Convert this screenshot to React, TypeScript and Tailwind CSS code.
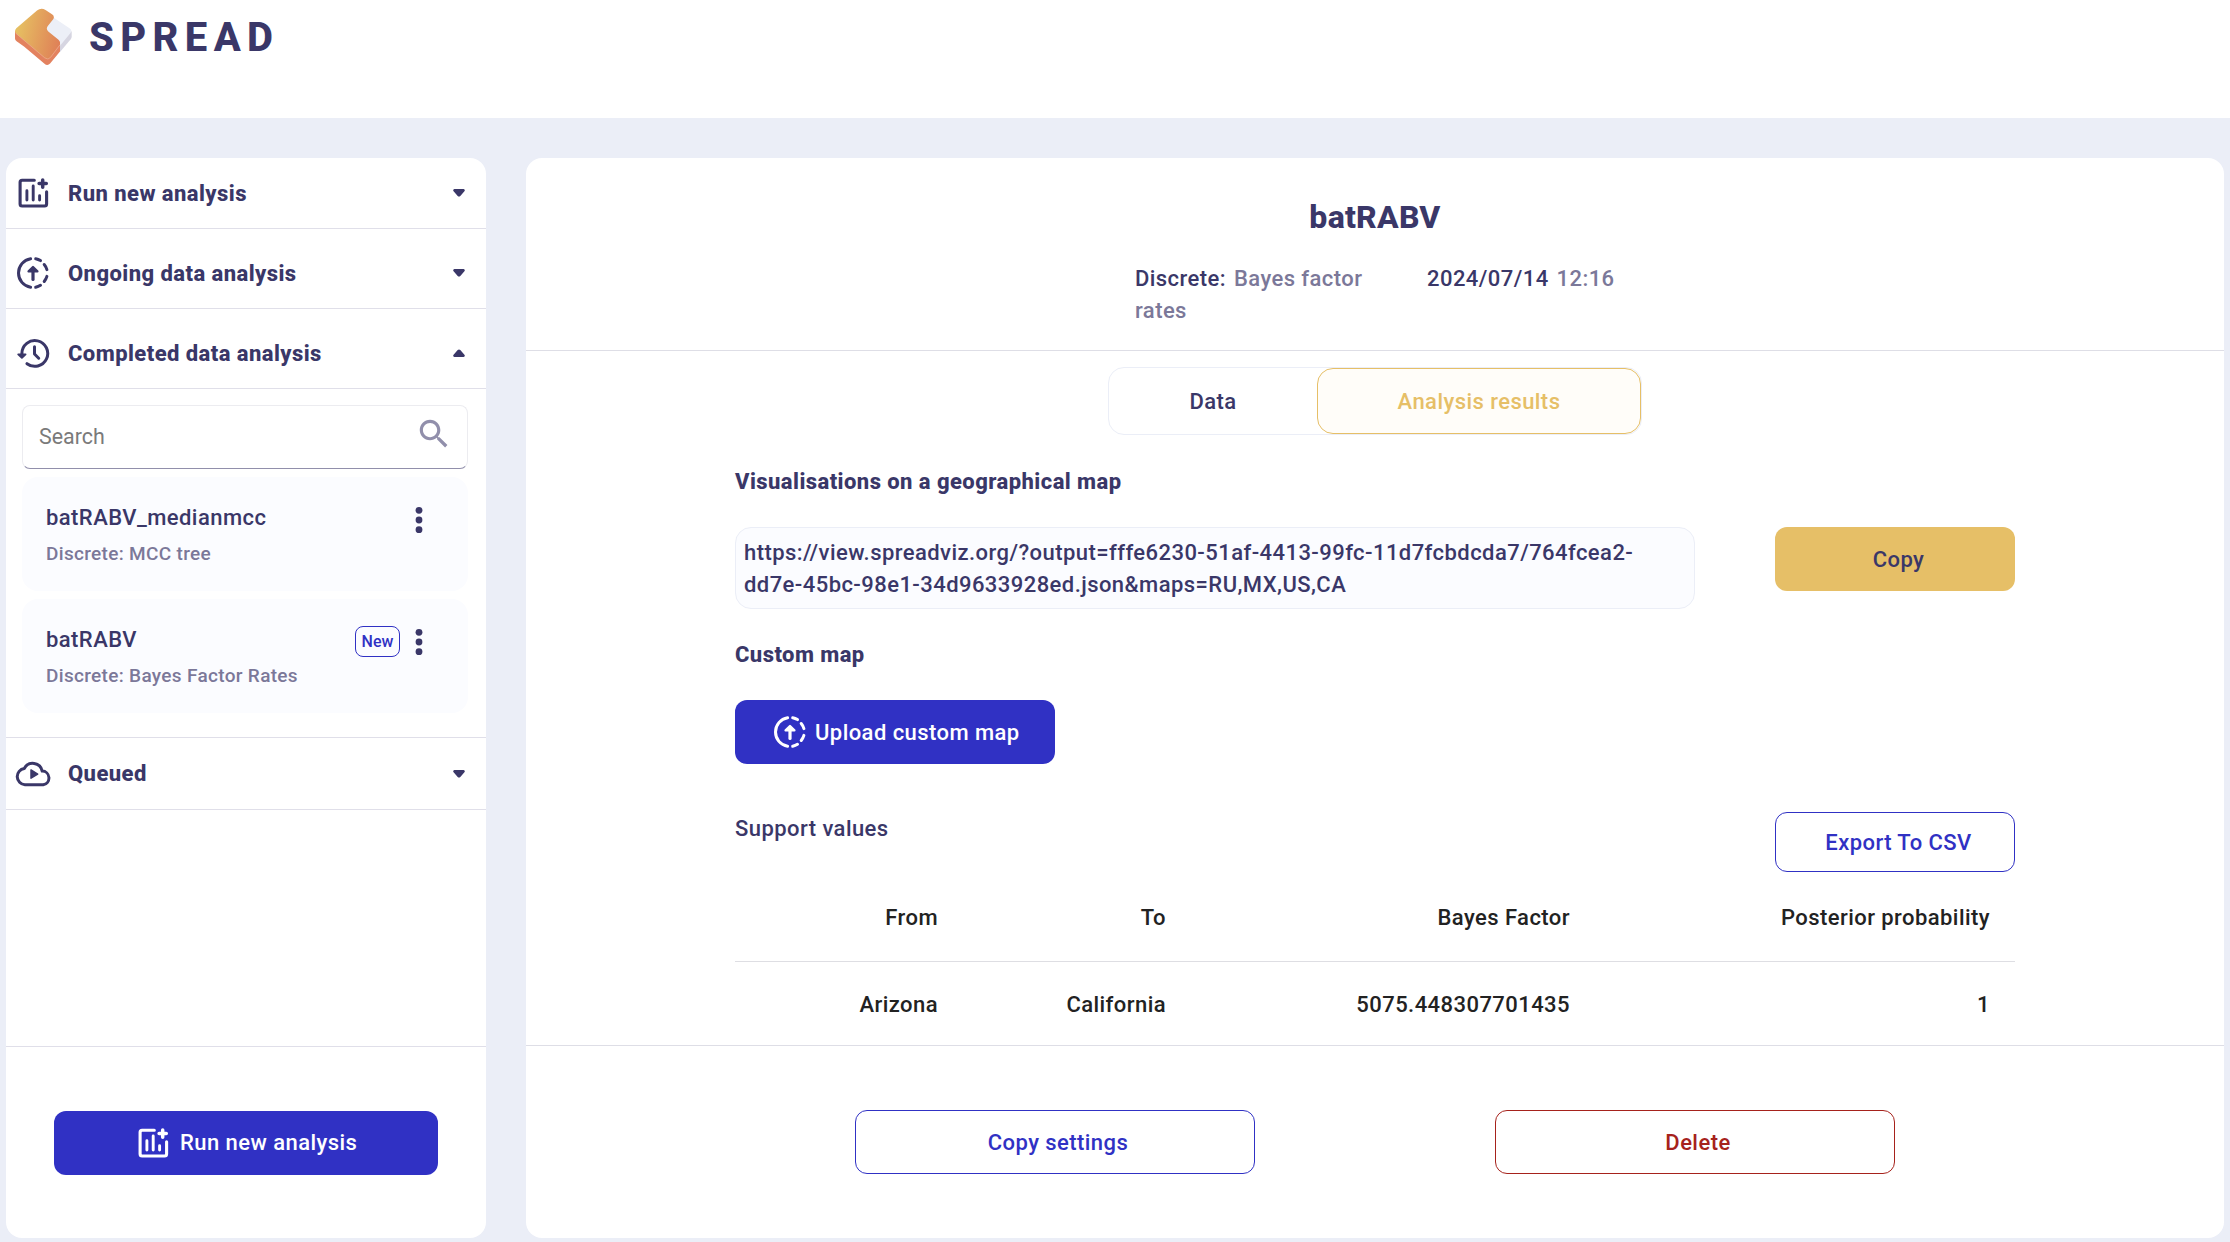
import React from "react";

function Logo() {
  return (
    <svg width="60" height="58" viewBox="14 8 60 58" fill="none">
      <defs>
        <linearGradient id="top" x1="16" y1="32" x2="60" y2="42" gradientUnits="userSpaceOnUse">
          <stop stopColor="#e6c062" />
          <stop offset="1" stopColor="#df8057" />
        </linearGradient>
      </defs>
      <path d="M70 29.5q1.7 1.3 1.7 3v4q0 1.500-1 2.800L60 52V40Z" fill="#d6d5e1" />
      <path d="M52 16.5 69.5 28.3q3 2 1 4.6L60.2 45.6 46 30Z" fill="#eceff7" />
      <path d="M15 31v7.5q0 1.5 1.6 2.8L24 46.5 44.5 63.7q3 2.6 5.600-.200L60 51.500V42Z" fill="#e3825f" />
      <path
        d="M16.3 28.2 37 10.6q4.200-3.300 8.500-.5L52 14.300q3 2 1.200 5L48 25.800q-2.500 3 .300 5.700L58.500 39.700q2.800 2.600.600 5.600L50.600 57.200q-2.400 3.200-5.800.600L16.600 34q-3-2.800-.300-5.800Z"
        fill="url(#top)"
      />
      <path d="M15.500 33 44.800 57.900q3.400 2.600 5.800-.600L60 44.800" stroke="#edb092" strokeWidth=".7" />
    </svg>
  );
}

function ChartIcon() {
  return (
    <svg className="shrink-0" width="34" height="34" viewBox="0 0 34 34" fill="none" stroke="currentColor" strokeLinecap="round" strokeLinejoin="round">
      <path d="M18.300 4.200H6.100a2 2 0 0 0-2 2V28a2 2 0 0 0 2 2h22.500a2 2 0 0 0 2-2V15.700" strokeWidth="3.100" />
      <path d="M10.900 14.700v9.300M17.200 10v14M23.600 19.800V24" strokeWidth="2.900" />
      <path d="M26.700 4v7.200M23.100 7.600h7.200" strokeWidth="3.500" />
    </svg>
  );
}

function UploadIcon() {
  return (
    <svg className="shrink-0" width="34" height="34" viewBox="0 0 34 34" fill="none" stroke="currentColor" strokeLinecap="round">
      <path d="M14.600 2.700A14.500 14.500 0 0 0 14.600 31.300" strokeWidth="3" />
      <path d="M19.700 2.700q2.600.500 4.800 1.900M28.200 8.500q1.900 2.300 2.700 5.100M30.900 20.400q-.800 2.700-2.700 5.100M24.500 29.300q-2.200 1.400-4.800 2" strokeWidth="3" />
      <path d="M17 13v10.500" strokeWidth="3.200" />
      <path d="M17 11 12.600 15.300h8.800Z" fill="currentColor" strokeWidth="2.400" strokeLinejoin="round" />
    </svg>
  );
}

function HistoryIcon() {
  return (
    <svg className="shrink-0" width="34" height="34" viewBox="0 0 34 34" fill="none" stroke="currentColor" strokeLinecap="round" strokeLinejoin="round">
      <path d="M5.900 18.500V17.300A12.900 12.900 0 1 1 11 27.700" strokeWidth="3" />
      <path d="M2.200 18.300h7.400L5.900 21.900Z" fill="currentColor" strokeWidth="1.800" />
      <path d="M18.500 10.700v7.300l4.200 4.200" strokeWidth="3" />
    </svg>
  );
}

function QueueIcon() {
  return (
    <svg className="-mx-px shrink-0" width="36" height="34" viewBox="0 0 36 34" fill="none">
      <path
        d="M9.300 11.500a9.600 9.600 0 0 1 17.900 2.600A6.900 6.900 0 0 1 28.200 27.800H9.900A8.200 8.200 0 0 1 9.300 11.500Z"
        stroke="currentColor"
        strokeWidth="3"
        strokeLinejoin="round"
      />
      <path d="M16 13v8.200l6.700-4.100Z" fill="currentColor" stroke="currentColor" strokeWidth="1.500" strokeLinejoin="round" />
    </svg>
  );
}

function Caret({ open }: { open?: boolean }) {
  return (
    <svg className={open ? "rotate-180" : ""} width="12" height="8" viewBox="0 0 12 8" fill="currentColor">
      <path d="M1.400 0h9.200q1.400.2 1.200 1.500-.1.600-.6 1.100L7.300 7q-1.300 1.200-2.600 0L.8 2.600Q.300 2.100.2 1.500 0 .2 1.400 0Z" />
    </svg>
  );
}

function Dots() {
  return (
    <svg width="8" height="28" viewBox="0 0 8 28" fill="currentColor">
      <circle cx="4" cy="4.300" r="3.400" />
      <circle cx="4" cy="14" r="3.400" />
      <circle cx="4" cy="23.700" r="3.400" />
    </svg>
  );
}

function SectionHeader({ icon, label, open }: { icon: React.ReactNode; label: string; open?: boolean }) {
  return (
    <div className="flex h-8 items-center pr-[21px] pl-[10px]">
      {icon}
      <span className="ml-[18px] grow font-extrabold">{label}</span>
      <Caret open={open} />
    </div>
  );
}

function AnalysisCard({ name, kind, isNew }: { name: string; kind: string; isNew?: boolean }) {
  return (
    <div className="flex h-[114px] justify-between rounded-[16px] bg-[#fbfcff] pt-[25px] pr-[45px] pl-6">
      <div>
        <div className="leading-8">{name}</div>
        <div className="mt-2 text-[19px] leading-6 tracking-[0.32px] text-[#7b7899]">{kind}</div>
      </div>
      <div className="mt-[2px] flex h-8 items-center gap-[15px]">
        {isNew && (
          <span className="mb-px flex h-[31px] w-[45px] items-center justify-center rounded-[8px] border border-[#3031c4] text-[16px] tracking-[0.1px] text-[#3031c4]">
            New
          </span>
        )}
        <Dots />
      </div>
    </div>
  );
}

const cols = "grid grid-cols-[228px_228px_404px_420px] text-right text-[#222] *:pr-[25px]";

export default function App() {
  return (
    <div className="flex h-[1242px] w-[2230px] flex-col overflow-hidden bg-[#ebeef7] font-[Roboto,sans-serif] text-[22px] font-medium tracking-[0.44px] text-[#3a3768]">
      <header className="flex h-[118px] items-start bg-white pt-2 pl-[14px]">
        <Logo />
        <span className="mt-[6px] ml-[15px] text-[40px] leading-[48px] font-extrabold tracking-[6.400px]">SPREAD</span>
      </header>

      <div className="flex gap-10 pt-10 pl-[6px]">
        <aside className="flex h-[1080px] w-[480px] flex-col rounded-[16px] bg-white">
          <div className="flex h-[71px] flex-col justify-center border-b border-[#e0dfe9]">
            <SectionHeader icon={<ChartIcon />} label="Run new analysis" />
          </div>
          <div className="h-20 border-b border-[#e0dfe9] pt-7">
            <SectionHeader icon={<UploadIcon />} label="Ongoing data analysis" />
          </div>
          <div className="h-20 border-b border-[#e0dfe9] pt-7">
            <SectionHeader icon={<HistoryIcon />} label="Completed data analysis" open />
          </div>
          <div className="flex h-[349px] flex-col gap-2 border-b border-[#e0dfe9] px-4 pt-4 pr-[18px]">
            <div className="flex h-16 shrink-0 items-start justify-between rounded-[8px] border border-[#ececf0] border-b-[#918fab] pr-[14px] pl-4">
              <span className="text-[21.400px] leading-[62px] font-normal tracking-normal text-[#7a7a7a]">Search</span>
              <svg className="mt-[9px]" width="38" height="38" viewBox="0 0 24 24" fill="#918fab">
                <path d="M15.500 14h-.790l-.280-.270C15.410 12.590 16 11.110 16 9.500 16 5.910 13.090 3 9.500 3S3 5.910 3 9.500 5.910 16 9.500 16c1.610 0 3.090-.590 4.230-1.570l.270.280v.790l5 4.990L20.490 19l-4.990-5zm-6 0C7.010 14 5 11.990 5 9.500S7.010 5 9.500 5 14 7.010 14 9.500 11.990 14 9.500 14z" />
              </svg>
            </div>
            <AnalysisCard name="batRABV_medianmcc" kind="Discrete: MCC tree" />
            <AnalysisCard name="batRABV" kind="Discrete: Bayes Factor Rates" isNew />
          </div>
          <div className="flex h-[72px] flex-col justify-center border-b border-[#e0dfe9]">
            <SectionHeader icon={<QueueIcon />} label="Queued" />
          </div>
          <div className="mt-auto h-[192px] border-t border-[#e0dfe9] px-12 pt-16">
            <button className="flex h-16 w-full items-center rounded-[12px] bg-[#3031c4] pb-px pl-[82px] text-white">
              <ChartIcon />
              <span className="ml-[10px]">Run new analysis</span>
            </button>
          </div>
        </aside>

        <main className="flex h-[1080px] w-[1698px] flex-col rounded-[16px] bg-white">
          <div className="h-[193px] border-b border-[#dedee6] pt-10">
            <h1 className="text-center text-[32px] leading-[38px] font-extrabold tracking-[0.250px]">batRABV</h1>
            <div className="mt-[27px] grid grid-cols-[264px_200px] gap-7 pl-[609px] leading-8">
              <div>
                Discrete: <span className="ml-[2px] text-[#7b7899]">Bayes factor</span>
                <br />
                <span className="text-[#7b7899]">rates</span>
              </div>
              <div>
                2024/07/14 <span className="ml-[2px] text-[#7b7899]">12:16</span>
              </div>
            </div>
          </div>

          <div className="flex flex-col items-center pt-4">
            <div className="flex h-[68px] w-[534px] rounded-[16px] border border-[#ebeef7]">
              <button className="w-[208px]">Data</button>
              <button className="w-[324px] rounded-[16px] border border-[#e6bf67] bg-[#fffdf9] text-[#e6bf67]">Analysis results</button>
            </div>

            <div className="flex w-[1280px] flex-col">
              <h2 className="mt-[31px] leading-8 font-extrabold">Visualisations on a geographical map</h2>
              <div className="mt-[29px] flex items-start justify-between">
                <div className="h-[82px] w-[960px] rounded-[16px] border border-[#ebeef7] bg-[#fbfcff] pt-[9px] pl-2 leading-8">
                  https://view.spreadviz.org/?output=fffe6230-51af-4413-99fc-11d7fcbdcda7/764fcea2-
                  <br />
                  dd7e-45bc-98e1-34d9633928ed.json&amp;maps=RU,MX,US,CA
                </div>
                <button className="h-16 w-60 rounded-[12px] bg-[#e6bf67] pl-[7px]">Copy</button>
              </div>
              <h2 className="mt-[30px] leading-8 font-extrabold">Custom map</h2>
              <button className="mt-[29px] flex h-16 w-80 items-center rounded-[12px] bg-[#3031c4] pl-[38px] text-white">
                <UploadIcon />
                <span className="ml-2">Upload custom map</span>
              </button>
              <div className="mt-12 flex items-start justify-between">
                <span className="mt-px leading-8">Support values</span>
                <button className="h-[60px] w-60 rounded-[12px] border border-[#3031c4] pl-[7px] text-[#3031c4]">Export To CSV</button>
              </div>
              <div className={`${cols} h-[90px] border-b border-[#dedee3] pt-[30px] leading-8`}>
                <span>From</span>
                <span>To</span>
                <span>Bayes Factor</span>
                <span>Posterior probability</span>
              </div>
              <div className={`${cols} h-[83px] pt-[27px] leading-8`}>
                <span>Arizona</span>
                <span>California</span>
                <span>5075.448307701435</span>
                <span>1</span>
              </div>
            </div>
          </div>

          <div className="flex grow gap-[240px] border-t border-[#dedee6] pt-16 pl-[329px]">
            <button className="h-16 w-[400px] rounded-[12px] border border-[#3031c4] pl-[6px] text-[#3031c4]">Copy settings</button>
            <button className="h-16 w-[400px] rounded-[12px] border border-[#a6221c] pl-[6px] text-[#a6221c]">Delete</button>
          </div>
        </main>
      </div>
    </div>
  );
}
